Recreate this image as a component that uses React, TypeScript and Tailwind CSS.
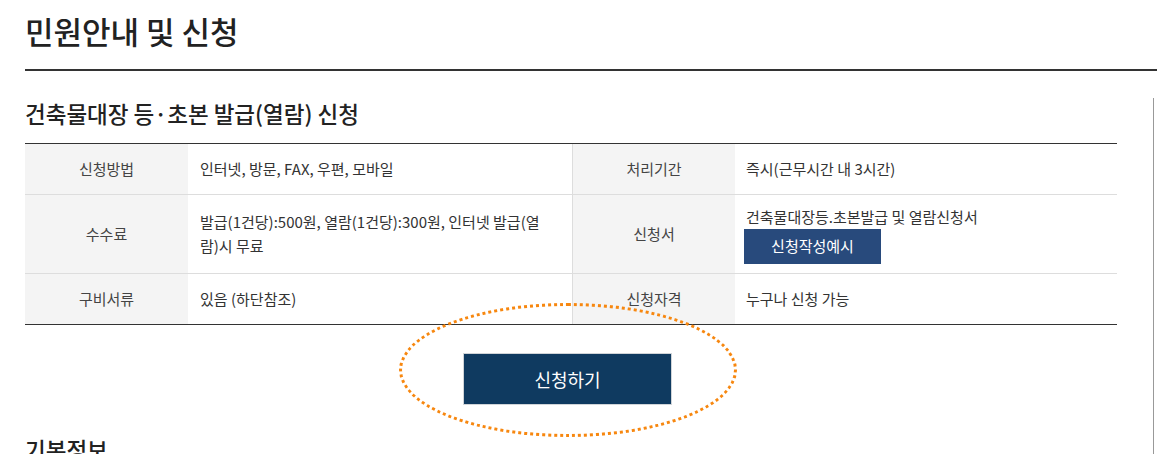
import React from "react";

const font = { fontFamily: '"Noto Sans CJK KR", "Noto Sans", sans-serif' };

export default function App() {
  return (
    <div className="w-[1157px] h-[454px] overflow-hidden bg-white text-[#333]" style={font}>
      {/* page title */}
      <div className="ml-[25px] pt-[13px] pb-[20px] border-b-2 border-[#333]">
        <h1 className="text-[31px] leading-[36px] font-medium text-[#222]">민원안내 및 신청</h1>
      </div>

      <div className="w-[1154px] border-r border-[#999] pl-[25px] h-[400px]">
        <div className="w-[1092px] relative">
          <h2 className="mt-[27px] mb-[15px] text-[22.5px] leading-[30px] font-medium text-[#222]">
            건축물대장 등·초본 발급(열람) 신청
          </h2>

          <div className="border-t border-b border-[#333] text-[15px] leading-[24px]">
            <div className="grid grid-cols-[163px_384px_163px_382px] h-[51px] border-b border-[#ddd]">
              <div className="flex items-center justify-center bg-[#f4f4f4] text-[#444]">신청방법</div>
              <div className="flex items-center px-[12px]">인터넷, 방문, FAX, 우편, 모바일</div>
              <div className="flex items-center justify-center bg-[#f4f4f4] text-[#444] border-l border-[#ddd]">처리기간</div>
              <div className="flex items-center px-[11px]">즉시(근무시간 내 3시간)</div>
            </div>
            <div className="grid grid-cols-[163px_384px_163px_382px] h-[79px] border-b border-[#ddd]">
              <div className="flex items-center justify-center bg-[#f4f4f4] text-[#444]">수수료</div>
              <div className="flex items-center px-[12px]">
                <p className="w-[348px] break-all">발급(1건당):500원, 열람(1건당):300원, 인터넷 발급(열람)시 무료</p>
              </div>
              <div className="flex items-center justify-center bg-[#f4f4f4] text-[#444] border-l border-[#ddd]">신청서</div>
              <div className="flex flex-col justify-center items-start px-[11px]">
                <span>건축물대장등.초본발급 및 열람신청서</span>
                <button className="-ml-[2px] h-[35px] w-[137px] bg-[#284a7c] text-white text-[15px]">신청작성예시</button>
              </div>
            </div>
            <div className="grid grid-cols-[163px_384px_163px_382px] h-[50px]">
              <div className="flex items-center justify-center bg-[#f4f4f4] text-[#444]">구비서류</div>
              <div className="flex items-center px-[12px]">있음 (하단참조)</div>
              <div className="flex items-center justify-center bg-[#f4f4f4] text-[#444] border-l border-[#ddd]">신청자격</div>
              <div className="flex items-center px-[11px]">누구나 신청 가능</div>
            </div>
          </div>

          <div className="flex justify-center pr-[7px] mt-[28px]">
            <button className="w-[209px] h-[52px] bg-[#0f3a60] border border-[#d0d4d8] text-white text-[18px]">
              신청하기
            </button>
          </div>

          {/* highlight annotation */}
          <div className="absolute left-[374px] top-[205px] w-[338px] h-[134px] rounded-[50%] border-[3px] border-dotted border-[#f7870f] pointer-events-none" />

          <h2 className="mt-[29px] text-[22.5px] leading-[30px] font-medium text-[#222]">기본정보</h2>
        </div>
      </div>
    </div>
  );
}
